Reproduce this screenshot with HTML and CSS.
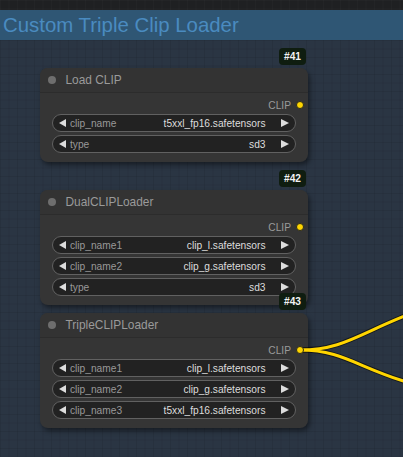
FILE: index.html
```html
<!DOCTYPE html>
<html>
<head>
<meta charset="utf-8">
<link rel="stylesheet" href="styles.css">
</head>
<body>
<div class="canvas">
  <div class="topband"></div>
  <section class="group">
    <header class="group-title">Custom Triple Clip Loader</header>
    <div class="group-body">
      <div class="node n1">
        <span class="badge">#41</span>
        <div class="node-title"><span class="title-dot"></span>Load CLIP</div>
        <div class="node-body">
          <div class="output">CLIP<span class="slot"></span></div>
          <div class="widgets">
            <div class="widget"><span class="arrow left"></span><span class="label">clip_name</span><span class="value">t5xxl_fp16.safetensors</span><span class="arrow right"></span></div>
            <div class="widget"><span class="arrow left"></span><span class="label">type</span><span class="value">sd3</span><span class="arrow right"></span></div>
          </div>
        </div>
      </div>
      <div class="node n2">
        <span class="badge">#42</span>
        <div class="node-title"><span class="title-dot"></span>DualCLIPLoader</div>
        <div class="node-body">
          <div class="output">CLIP<span class="slot"></span></div>
          <div class="widgets">
            <div class="widget"><span class="arrow left"></span><span class="label">clip_name1</span><span class="value">clip_l.safetensors</span><span class="arrow right"></span></div>
            <div class="widget"><span class="arrow left"></span><span class="label">clip_name2</span><span class="value">clip_g.safetensors</span><span class="arrow right"></span></div>
            <div class="widget"><span class="arrow left"></span><span class="label">type</span><span class="value">sd3</span><span class="arrow right"></span></div>
          </div>
        </div>
      </div>
      <div class="node n3">
        <span class="badge">#43</span>
        <div class="node-title"><span class="title-dot"></span>TripleCLIPLoader</div>
        <div class="node-body">
          <div class="output">CLIP<span class="slot"></span></div>
          <div class="widgets">
            <div class="widget"><span class="arrow left"></span><span class="label">clip_name1</span><span class="value">clip_l.safetensors</span><span class="arrow right"></span></div>
            <div class="widget"><span class="arrow left"></span><span class="label">clip_name2</span><span class="value">clip_g.safetensors</span><span class="arrow right"></span></div>
            <div class="widget"><span class="arrow left"></span><span class="label">clip_name3</span><span class="value">t5xxl_fp16.safetensors</span><span class="arrow right"></span></div>
          </div>
        </div>
      </div>
    </div>
  </section>
  <svg class="wires" width="403" height="457" viewBox="0 0 403 457">
    <path class="wire-shadow" d="M300 350 C 345 350, 360 332, 420 310"/>
    <path class="wire-shadow" d="M300 350 C 345 350, 360 370, 420 386"/>
    <path class="wire" d="M300 350 C 345 350, 360 332, 420 310"/>
    <path class="wire" d="M300 350 C 345 350, 360 370, 420 386"/>
  </svg>
</div>
</body>
</html>
```
FILE: styles.css
```css
* { box-sizing: border-box; }
html, body {
  margin: 0;
  padding: 0;
  width: 403px;
  height: 457px;
  overflow: hidden;
  background: #1f2022;
  font-family: "Liberation Sans", Arial, sans-serif;
}
.canvas {
  position: relative;
  width: 403px;
  height: 457px;
  display: flex;
  flex-direction: column;
  background-color: #1f2022;
  background-image:
    linear-gradient(to right, rgba(255,255,255,0.02) 1px, transparent 1px),
    linear-gradient(to bottom, rgba(255,255,255,0.02) 1px, transparent 1px);
  background-size: 8.5px 8.5px;
}
.topband { height: 10px; flex: none; }
.group {
  flex: 1;
  display: flex;
  flex-direction: column;
}
.group-title {
  height: 30px;
  flex: none;
  background: #2f5674;
  color: #4a8bc0;
  font-size: 20.4px;
  line-height: 30px;
  padding-left: 3px;
  white-space: nowrap;
}
.group-body {
  flex: 1;
  padding: 28px 0 0 40px;
  background-color: #2a3543;
  background-image:
    linear-gradient(to right, rgba(0,0,0,0.07) 1px, transparent 1px),
    linear-gradient(to bottom, rgba(0,0,0,0.07) 1px, transparent 1px);
  background-size: 8.5px 8.5px;
}
.node {
  position: relative;
  width: 268px;
  background: #353535;
  border-radius: 8px;
  box-shadow: 2px 3px 5px rgba(0,0,0,0.45);
}
.n2 { margin-top: 28px; }
.n3 { margin-top: 8px; }
.badge {
  position: absolute;
  right: 2px;
  bottom: calc(100% + 3px);
  height: 17px;
  width: 27px;
  border-radius: 4px;
  background: #0f1d10;
  color: #f2f2f2;
  font-weight: bold;
  font-size: 10.2px;
  line-height: 17px;
  text-align: center;
  z-index: 3;
}
.node-title {
  height: 25px;
  display: flex;
  align-items: center;
  padding: 0 0 1px 8px;
  border-bottom: 1px solid #2c2c2c;
  background: #333333;
  border-radius: 8px 8px 0 0;
  color: #9a9a9a;
  font-size: 11.9px;
}
.title-dot {
  width: 8px;
  height: 8px;
  border-radius: 50%;
  background: #6e6e6e;
  margin-right: 9.5px;
  flex: none;
}
.node-body {
  padding: 3px 12px 9px 12px;
}
.output {
  height: 18px;
  display: flex;
  align-items: center;
  justify-content: flex-end;
  margin-right: -7.5px;
  color: #9a9a9a;
  font-size: 10.2px;
}
.widgets {
  display: flex;
  flex-direction: column;
  gap: 3px;
}
.slot {
  position: relative;
  z-index: 2;
  width: 8px;
  height: 8px;
  margin-left: 4.5px;
  border-radius: 50%;
  background: #ffd500;
  border: 1px solid #2a2a1a;
}
.widget {
  height: 18px;
  display: flex;
  align-items: center;
  padding: 0 6px 0 6px;
  background: #222222;
  border: 1px solid #616161;
  border-radius: 9px;
  font-size: 10.2px;
}
.arrow {
  width: 0;
  height: 0;
  border-top: 4.5px solid transparent;
  border-bottom: 4.5px solid transparent;
  flex: none;
}
.arrow.left { border-right: 7.5px solid #dddddd; }
.arrow.right { border-left: 8px solid #dddddd; }
.label {
  color: #999999;
  margin-left: 4px;
  flex: 1;
  white-space: nowrap;
}
.value {
  color: #dddddd;
  margin-right: 15.5px;
  white-space: nowrap;
}
.wires {
  position: absolute;
  left: 0;
  top: 0;
  z-index: 1;
  pointer-events: none;
}
.wire-shadow {
  fill: none;
  stroke: rgba(0,0,0,0.55);
  stroke-width: 5;
}
.wire {
  fill: none;
  stroke: #ffd500;
  stroke-width: 3;
}
```
